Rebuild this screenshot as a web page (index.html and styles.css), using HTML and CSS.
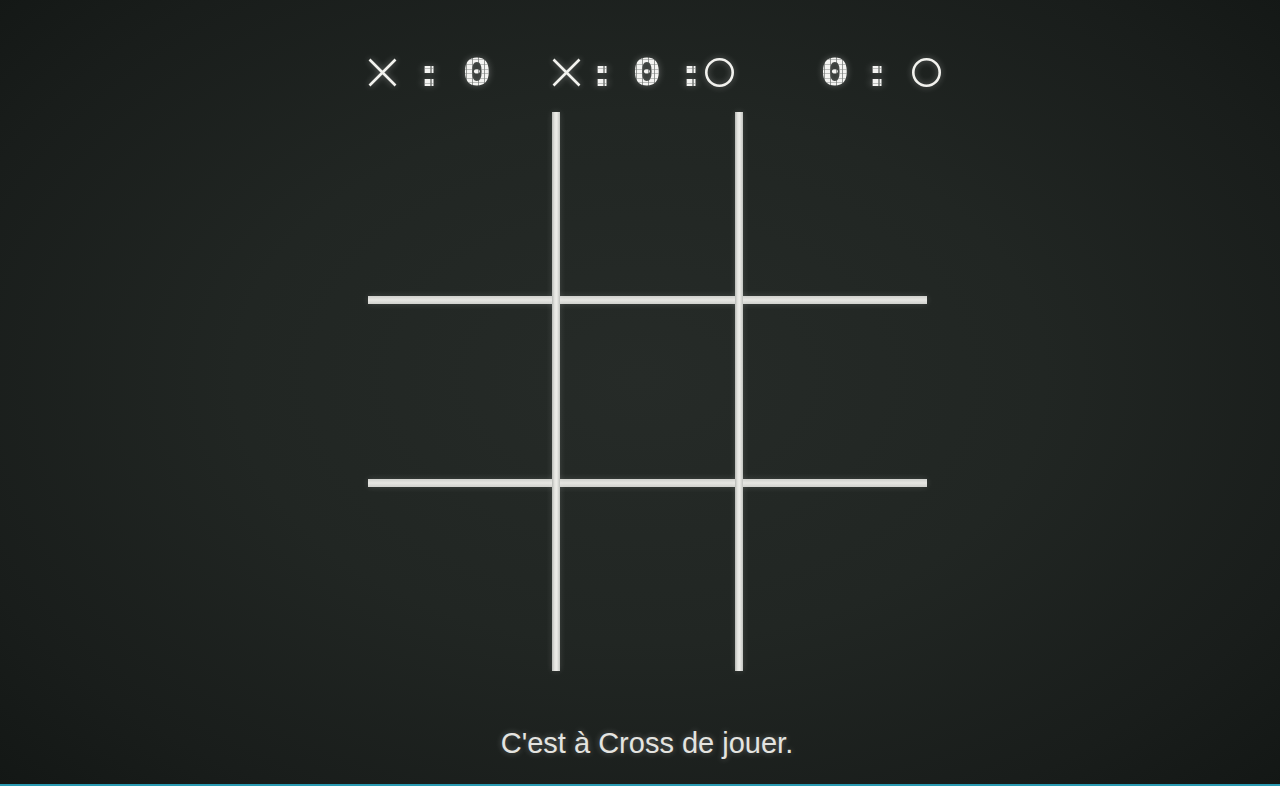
FILE: index.html
```html
<!DOCTYPE html>
<html lang="fr">
<head>
<meta charset="utf-8">
<title>Morpion</title>
<link rel="stylesheet" href="styles.css">
</head>
<body>
<main class="game">
  <header class="scores">
    <div class="score score-x">
      <svg class="mark" viewBox="0 0 29 29" aria-label="Cross"><path d="M1.5 1.5 L27.5 27.5 M27.5 1.5 L1.5 27.5"/></svg>
      <span class="sep g1a">:</span>
      <span class="num g1b">0</span>
    </div>
    <div class="score score-draw">
      <svg class="mark" viewBox="0 0 29 29" aria-label="Cross"><path d="M1.5 1.5 L27.5 27.5 M27.5 1.5 L1.5 27.5"/></svg>
      <span class="sep g2a">:</span>
      <span class="num g2b">0</span>
      <span class="sep g2c">:</span>
      <svg class="mark g2d" viewBox="0 0 29 29" aria-label="Circle"><circle cx="14.5" cy="14.5" r="13.2"/></svg>
    </div>
    <div class="score score-o">
      <span class="num">0</span>
      <span class="sep g3a">:</span>
      <svg class="mark g3b" viewBox="0 0 29 29" aria-label="Circle"><circle cx="14.5" cy="14.5" r="13.2"/></svg>
    </div>
  </header>

  <section class="board">
    <div class="line h h1"></div>
    <div class="line h h2"></div>
    <div class="line v v1"></div>
    <div class="line v v2"></div>
  </section>

  <p class="status">C'est à Cross de jouer.</p>
</main>
</body>
</html>
```
FILE: styles.css
```css
html, body {
  margin: 0;
  padding: 0;
}

body {
  height: 786px;
  box-sizing: border-box;
  border-bottom: 2px solid #2a9ab2;
  background: radial-gradient(ellipse 70% 75% at 50% 48%, #262b28 0%, #212623 45%, #191d1b 80%, #131715 100%);
  font-family: "Liberation Sans", Arial, sans-serif;
  color: #e2e2de;
  display: flex;
  flex-direction: column;
  align-items: center;
  padding-left: 14px;
  overflow: hidden;
}

.game {
  width: 558px;
  display: flex;
  flex-direction: column;
}

/* ---------- scores ---------- */
.scores {
  margin-top: 57px;
  height: 30px;
  display: flex;
  align-items: center;
}

.score {
  display: flex;
  align-items: center;
  flex-shrink: 0;
  height: 30px;
}

.score-draw { margin-left: 63.5px; }
.score-o { margin-left: 88.5px; }

.mark {
  width: 29px;
  height: 29px;
  flex-shrink: 0;
  fill: none;
  stroke: #f2f2ee;
  stroke-width: 2.6;
  filter: drop-shadow(0 0 3px rgba(255, 255, 255, 0.35));
}

.num, .sep {
  width: 24px;
  flex-shrink: 0;
  text-align: center;
  font-family: "DejaVu Sans Mono", "Liberation Mono", monospace;
  font-weight: bold;
  font-size: 38px;
  line-height: 30px;
  height: 30px;
  color: transparent;
  background-image:
    repeating-linear-gradient(0deg, rgba(0,0,0,0) 0 3.6px, rgba(120,124,122,0.45) 3.6px 4.6px),
    repeating-linear-gradient(90deg, #f4f4f2 0 3.6px, rgba(170,172,170,0.8) 3.6px 4.6px);
  -webkit-background-clip: text;
  background-clip: text;
  filter: drop-shadow(0 0 3px rgba(255, 255, 255, 0.3));
}

.num { transform: scaleX(1.3); }
.sep { transform: scale(1.5, 1.05); }

.g1a { margin-left: 19.5px; }
.g1b { margin-left: 24px; }
.g2a { margin-left: 8.5px; }
.g2b { margin-left: 21.5px; }
.g2c { margin-left: 19.5px; }
.g2d { margin-left: 2.5px; }
.g3a { margin-left: 18.5px; }
.g3b { margin-left: 23px; }

/* ---------- board ---------- */
.board {
  margin-top: 25px;
  display: grid;
  grid-template-columns: 184px 7.5px 175.5px 7.5px 184px;
  grid-template-rows: 184px 7.5px 175.5px 7.5px 184px;
}

.line {
  box-shadow: 0 0 6px rgba(255, 255, 255, 0.15);
}

.line.h {
  grid-column: 1 / -1;
  background: linear-gradient(180deg, #cfd0cc 0%, #e4e4e0 45%, #e4e4e0 55%, #cfd0cc 100%);
}
.h1 { grid-row: 2; }
.h2 { grid-row: 4; }

.line.v {
  grid-row: 1 / -1;
  background: linear-gradient(90deg, #b8bab6 0%, #e6e6e2 35%, #ececE8 60%, #c0c2be 100%);
}
.v1 { grid-column: 2; }
.v2 { grid-column: 4; }

/* ---------- status ---------- */
.status {
  margin: 54px 0 0;
  text-align: center;
  font-size: 29px;
  line-height: 36px;
  color: #e4e4e0;
  text-shadow: 0 0 6px rgba(255, 255, 255, 0.3);
}
```
